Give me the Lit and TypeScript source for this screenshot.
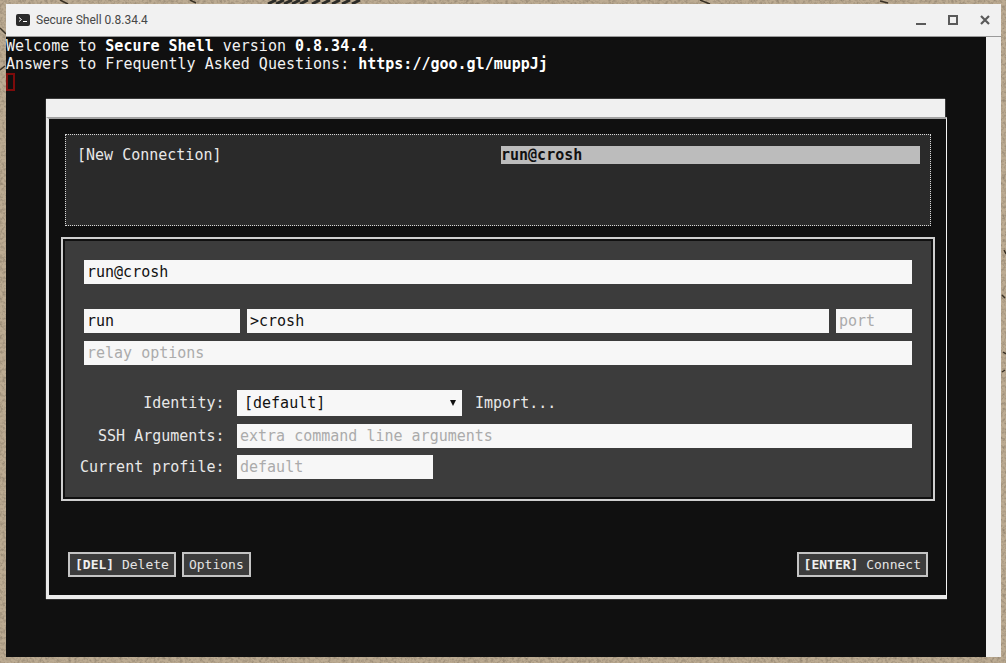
import { LitElement, html, css } from "lit";
import { customElement } from "lit/decorators.js";

@customElement("app-root")
export class AppRoot extends LitElement {
  static styles = css`
    :host { display: block; position: relative; width: 1006px; height: 663px; overflow: hidden; background: #bcab92; font-family: "DejaVu Sans Mono", monospace; }
    .wall { position: absolute; inset: 0; width: 1006px; height: 663px; }
    .window { position: absolute; left: 6px; top: 4px; width: 995px; height: 653px; display: flex; flex-direction: column; background: #f1f1f1; border-radius: 2px 2px 0 0; }
    .titlebar { height: 32px; flex: none; display: flex; align-items: center; padding: 0 11px 0 10px; border-bottom: 1px solid #9a9a9a; background: #f1f1f1; }
    .appicon { width: 14px; height: 14px; margin-right: 6px; flex: none; }
    .title { font: 12px Roboto, sans-serif; color: #474747; flex: 1; }
    .winbtns { display: flex; gap: 22px; align-items: center; }
    .winbtns svg { display: block; width: 10px; height: 10px; }
    .body { flex: 1; display: flex; min-height: 0; }
    .term { position: relative; flex: 1; background: #101010; color: #f2f2f2; font-size: 15px; line-height: 18px; }
    .line { height: 18px; white-space: pre; }
    .line b { color: #fff; }
    .cursor { width: 9px; height: 18px; box-sizing: border-box; border: 2px solid #7d0b0b; }
    .scroll { width: 15px; flex: none; background: #f1f1f1; }
    .dialog { position: absolute; left: 40px; top: 62px; width: 901px; }
    .dhead { width: 899px; height: 18px; background: #f0f0f0; box-shadow: 0 -1px 0 #3a3a3a, 1px 0 0 #3a3a3a, -1px 0 0 #2a2a2a; }
    .frame { box-sizing: border-box; height: 482px; border-style: solid; border-width: 2px 1px 4px 3px; border-color: #a2a2a2 #f4f4f4 #ececec #e8e8e8; box-shadow: 0 1px 0 #333, -1px 0 0 #2a2a2a; background: #101010; padding: 15px 18px 18px 16px; display: flex; flex-direction: column; }
    .list { box-sizing: border-box; height: 92px; margin-right: -3px; flex: none; border: 1px dotted #d8d8d8; background: #2a2a2a; padding: 11px; display: grid; grid-template-columns: 424px 419px; align-items: start; color: #e8e8e8; line-height: 18px; font-size: 15px; }
    .sel { background: #bcbcbc; color: #111; font-weight: bold; height: 18px; }
    .outer { margin: 11px -7px 0 -4px; flex: none; border: 2px solid #cfcfcf; padding: 2px; }
    .panel { background: #3c3c3c; height: 256px; box-sizing: border-box; padding: 19px; display: flex; flex-direction: column; }
    input, select { box-sizing: border-box; border: none; border-radius: 0; outline: none; margin: 0; background: #f7f7f7; color: #111; font: 15px "DejaVu Sans Mono", monospace; height: 24px; padding: 0 3px; min-width: 0; display: block; }
    input::placeholder { color: #ababab; opacity: 1; }
    .wide { width: 100%; flex: none; }
    .dest { display: grid; grid-template-columns: 156px 1fr 76px; column-gap: 7px; margin: 25px 0 8px; }
    .opts { display: grid; grid-template-columns: 145.5px 1fr; column-gap: 12.5px; margin: 25px 0 0 -5px; color: #e8e8e8; font-size: 15px; }
    .lab { text-align: right; white-space: nowrap; align-self: center; }
    .identity { display: flex; align-items: center; gap: 13px; height: 26px; margin-bottom: 8px; }
    .selwrap { position: relative; width: 225px; height: 26px; flex: none; }
    .selwrap select { appearance: none; -webkit-appearance: none; width: 225px; height: 26px; padding: 0 20px 0 7px; }
    .arrow { position: absolute; right: 6px; top: 10px; width: 0; height: 0; border-left: 3px solid transparent; border-right: 3px solid transparent; border-top: 6px solid #111; pointer-events: none; }
    .opts .lab.first { margin-bottom: 8px; }
    .opts .lab.second { margin-bottom: 7px; }
    .args { margin-bottom: 7px; }
    .profile { width: 196px; }
    .foot { margin-top: auto; display: flex; gap: 6px; padding-left: 3px; }
    button { box-sizing: border-box; height: 25px; border: 2px solid #c4c4c4; background: #3c3c3c; color: #e4e4e4; font: 13px "DejaVu Sans Mono", monospace; padding: 0 5px; margin: 0; border-radius: 0; white-space: pre; }
    button b { color: #f0f0f0; }
    .spacer { flex: 1; }
  `;

  render() {
    return html`
      <svg class="wall" viewBox="0 0 1006 663" aria-hidden="true">
        <defs>
          <filter id="grain" x="0" y="0" width="100%" height="100%">
            <feTurbulence type="fractalNoise" baseFrequency="0.35" numOctaves="3" seed="7" />
            <feColorMatrix type="matrix" values="0 0 0 0 0.25  0 0 0 0 0.2  0 0 0 0 0.14  1.6 0 0 0 -0.65" />
          </filter>
        </defs>
        <rect width="1006" height="663" fill="#bcab92" />
        <rect width="1006" height="663" filter="url(#grain)" />
        <path d="M268 4 L276 0 M276 4 L284 0 M284 4 L292 0 M292 4 L300 0 M300 4 L308 0 M312 4 L320 0 M322 4 L330 0 M332 4 L340 0 M342 4 L350 0 M352 4 L360 0" stroke="#2c2c28" stroke-width="3" />
        <path d="M0 28 L6 34 M0 70 L5 66 M1002 295 l3 3 M1003 352 l3 2 M1002 372 l3 -2 M1004 250 l2 4 M60 0 l8 4 M190 0 l6 3 M700 0 l10 4 M880 1 l8 2" stroke="#3a3226" stroke-width="1.5" />
      </svg>
      <div class="window">
        <div class="titlebar">
          <svg class="appicon" viewBox="0 0 14 14">
            <rect width="14" height="12" y="1" rx="2" fill="#2b2b2b" />
            <path d="M3 4.5 L5.5 6.5 L3 8.5 M7 8.5 H11" stroke="#fff" stroke-width="1" fill="none" />
          </svg>
          <span class="title">Secure Shell 0.8.34.4</span>
          <div class="winbtns">
            <svg viewBox="0 0 10 10"><rect x="0" y="8" width="10" height="2" fill="#5a5a5a" /></svg>
            <svg viewBox="0 0 10 10"><rect x="1" y="1" width="8" height="8" fill="none" stroke="#5a5a5a" stroke-width="2" /></svg>
            <svg viewBox="0 0 10 10"><path d="M1 1 L9 9 M9 1 L1 9" stroke="#5a5a5a" stroke-width="2.2" /></svg>
          </div>
        </div>
        <div class="body">
          <div class="term">
            <div class="line">Welcome to <b>Secure Shell</b> version <b>0.8.34.4</b>.</div>
            <div class="line">Answers to Frequently Asked Questions: <b>https://goo.gl/muppJj</b></div>
            <div class="cursor"></div>
            <div class="dialog">
              <div class="dhead"></div>
              <div class="frame">
                <div class="list">
                  <div>[New Connection]</div>
                  <div class="sel">run@crosh</div>
                </div>
                <div class="outer">
                  <div class="panel">
                    <input class="wide" .value=${"run@crosh"} />
                    <div class="dest">
                      <input .value=${"run"} />
                      <input .value=${">crosh"} />
                      <input placeholder="port" />
                    </div>
                    <input class="wide" placeholder="relay options" />
                    <div class="opts">
                      <div class="lab first">Identity:</div>
                      <div class="identity">
                        <div class="selwrap">
                          <select><option>[default]</option></select>
                          <span class="arrow"></span>
                        </div>
                        <span>Import...</span>
                      </div>
                      <div class="lab second">SSH Arguments:</div>
                      <input class="args" placeholder="extra command line arguments" />
                      <div class="lab">Current profile:</div>
                      <input class="profile" placeholder="default" />
                    </div>
                  </div>
                </div>
                <div class="foot">
                  <button><b>[DEL]</b> Delete</button>
                  <button>Options</button>
                  <span class="spacer"></span>
                  <button><b>[ENTER]</b> Connect</button>
                </div>
              </div>
            </div>
          </div>
          <div class="scroll"></div>
        </div>
      </div>
    `;
  }
}
